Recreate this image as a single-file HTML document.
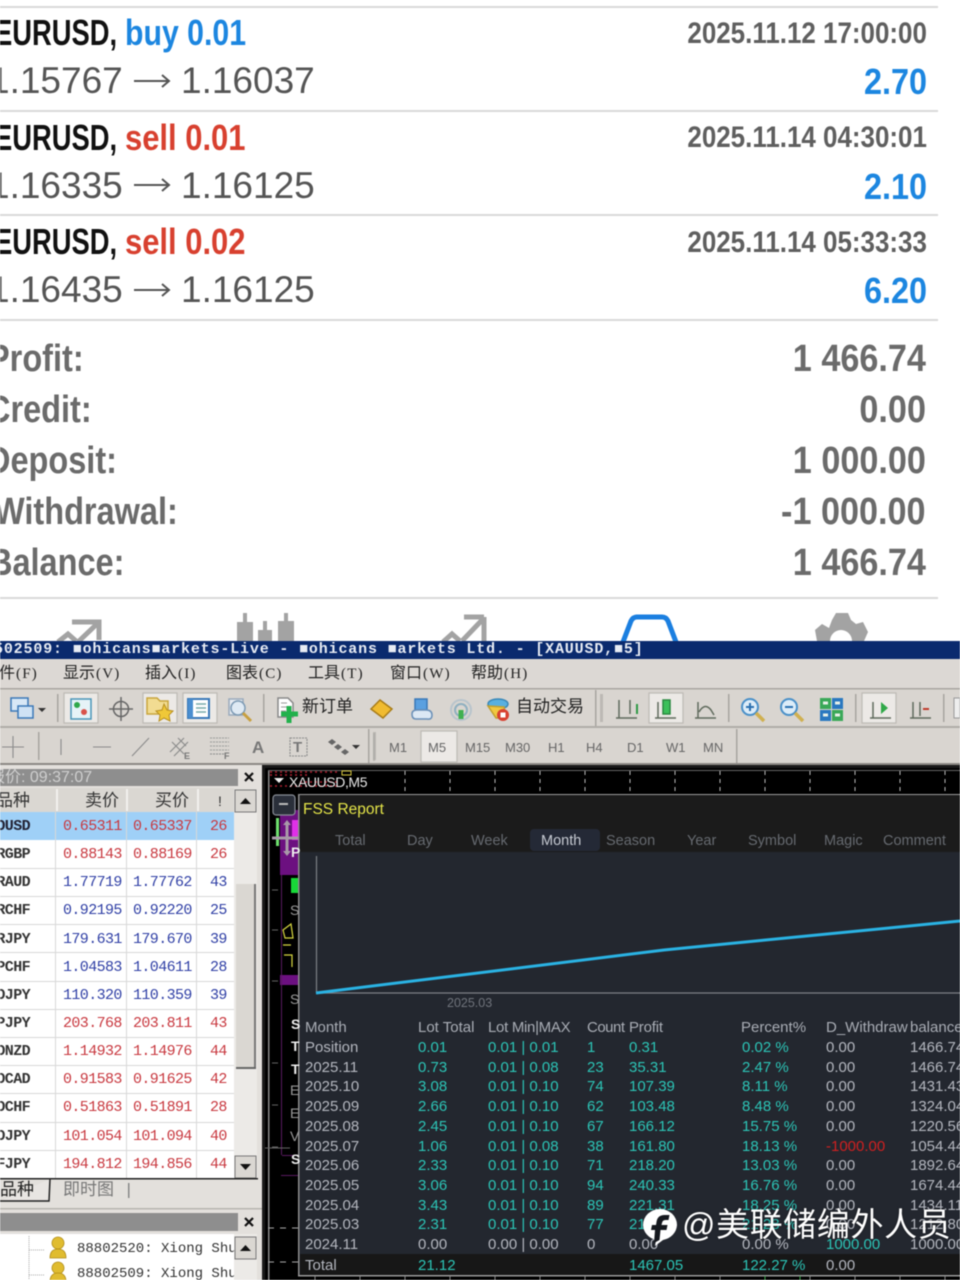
<!DOCTYPE html>
<html><head><meta charset="utf-8"><style>
html,body{margin:0;padding:0;background:#fff}
#p{position:relative;width:960px;height:1280px;overflow:hidden;background:#fff;font-family:"Liberation Sans","Noto Sans CJK SC",sans-serif;filter:blur(.45px)}
#p div{position:absolute}
.t{white-space:nowrap;line-height:1}
.b{font-weight:bold}
.hr{left:0;width:938px;height:1.5px;background:#d9d9d9}
.sym{font-size:36px;font-weight:bold;color:#111;left:-6px;transform:scaleX(.76);transform-origin:0 0;white-space:nowrap;line-height:1}
.act{font-size:36px;font-weight:bold;left:125px;transform:scaleX(.84);transform-origin:0 0;white-space:nowrap;line-height:1}
.sl{transform:scaleX(.86)}
.pr{font-size:37px;color:#555;white-space:nowrap;line-height:1}
.date{font-size:30px;font-weight:bold;color:#5f5f5f;right:33px;transform:scaleX(.865);transform-origin:100% 0;white-space:nowrap;line-height:1}
.val{font-size:36px;font-weight:bold;color:#1c86e0;right:33px;transform:scaleX(.9);transform-origin:100% 0;white-space:nowrap;line-height:1}
.lab{font-size:38px;font-weight:bold;color:#6b6b6b;transform:scaleX(.855);transform-origin:0 0;white-space:nowrap;line-height:1}
.num{font-size:38px;font-weight:bold;color:#6b6b6b;right:34px;transform:scaleX(.9);transform-origin:100% 0;white-space:nowrap;line-height:1}
.menu{top:665px;font-size:16px;color:#222;white-space:nowrap;line-height:18px}
.menu i{font-style:normal;font-family:"Liberation Serif",serif;font-size:15px;letter-spacing:1.2px;margin-left:1px}
.tf{top:741px;font-size:13px;color:#666;line-height:14px;white-space:nowrap}
.q{font-family:"Liberation Mono",monospace;font-size:15px;letter-spacing:-.6px;line-height:16px;white-space:nowrap}
.s{left:-20px;width:50px;text-align:right;font-family:"Liberation Mono",monospace;font-size:15px;letter-spacing:-.6px;font-weight:bold;color:#333;line-height:16px;white-space:nowrap}
.c1{left:63px}.c2{left:133px}.c3{left:210px}
.r{color:#c8383f}.bl{color:#2f3fa5}
.h{font-size:15px;line-height:16px;color:#a9adb5;white-space:nowrap}
.g{font-size:15px;line-height:16px;color:#b4b7bf;white-space:nowrap}
.e{font-size:15px;line-height:16px;color:#2cc4b6;white-space:nowrap}
.tb{top:833px;font-size:14.5px;color:#666a70;line-height:16px;white-space:nowrap}
</style></head><body><div id="p">

<div class="hr" style="top:6px"></div>
<div class="hr" style="top:110px"></div>
<div class="hr" style="top:214px"></div>
<div class="hr" style="top:319px"></div>
<div class="hr" style="top:597px"></div>

<div class="sym" style="top:15px">EURUSD,</div><div class="act" style="top:15px;color:#1c86e0">buy 0.01</div>
<div class="pr" style="top:62px;left:-11px">1.15767</div><div class="pr" style="top:62px;left:181px">1.16037</div>
<div class="date" style="top:19px">2025.11.12 17:00:00</div><div class="val" style="top:64px">2.70</div>

<div class="sym" style="top:120px">EURUSD,</div><div class="act sl" style="top:120px;color:#d8402f">sell 0.01</div>
<div class="pr" style="top:167px;left:-11px">1.16335</div><div class="pr" style="top:167px;left:181px">1.16125</div>
<div class="date" style="top:123px">2025.11.14 04:30:01</div><div class="val" style="top:169px">2.10</div>

<div class="sym" style="top:224px">EURUSD,</div><div class="act sl" style="top:224px;color:#d8402f">sell 0.02</div>
<div class="pr" style="top:271px;left:-11px">1.16435</div><div class="pr" style="top:271px;left:181px">1.16125</div>
<div class="date" style="top:228px">2025.11.14 05:33:33</div><div class="val" style="top:273px">6.20</div>

<div class="lab" style="top:340px;left:-12px">Profit:</div><div class="num" style="top:340px">1 466.74</div>
<div class="lab" style="top:391px;left:-13px">Credit:</div><div class="num" style="top:391px">0.00</div>
<div class="lab" style="top:442px;left:-13px">Deposit:</div><div class="num" style="top:442px">1 000.00</div>
<div class="lab" style="top:493px;left:-6px">Withdrawal:</div><div class="num" style="top:493px">-1 000.00</div>
<div class="lab" style="top:544px;left:-11px">Balance:</div><div class="num" style="top:544px">1 466.74</div>

<svg style="position:absolute;left:0;top:0" width="960" height="1280" viewBox="0 0 960 1280">
<!-- price arrows -->
<g fill="none" stroke="#555" stroke-width="2">
<path d="M134 81H168M162 75L169 81L162 87"/>
<path d="M134 185H168M162 179L169 185L162 191"/>
<path d="M134 290H168M162 284L169 290L162 296"/>
</g>
<!-- bottom nav icons -->
<g fill="none" stroke="#a3a3a3" stroke-width="5">
<path d="M72 622H99V640M99 622L78 642"/>
<path d="M58 642L68 634L76 641"/>
<path d="M484 617V641H484M484 617H464M484 618L462 641M443 642L452 634L460 641" />
</g>
<g fill="#a3a3a3">
<rect x="237" y="622" width="16" height="20"/><rect x="243" y="613" width="4" height="12"/>
<rect x="258" y="630" width="14" height="12"/><rect x="263" y="621" width="4" height="12"/>
<rect x="278" y="621" width="16" height="21"/><rect x="284" y="613" width="4" height="12"/>
<path d="M817 641L815 630L822 624L829 628L832 620L836 613H848L851 620L856 624L863 622L868 632L864 641H852A11 11 0 0 0 830 641Z"/>
</g>
<path d="M623 642L631 621Q633 617 637 617H662Q666 617 668 621L676 642" fill="none" stroke="#1b7fe0" stroke-width="5"/>

<!-- window chrome -->
<rect x="0" y="641" width="960" height="639" fill="#d9d5d0"/>
<rect x="0" y="641" width="960" height="18" fill="#0a2a6e"/>
<rect x="0" y="659" width="960" height="29" fill="#dcd8d4"/>
<rect x="0" y="688" width="960" height="1.5" fill="#a9a6a1"/>
<rect x="0" y="726" width="960" height="2" fill="#b0ada8"/>
<rect x="0" y="763" width="960" height="2" fill="#8c8985"/>
<rect x="0" y="765" width="262" height="515" fill="#e3e0dc"/>
<!-- toolbar separators -->
<g fill="#a8a5a0">
<rect x="57" y="694" width="1.5" height="28"/><rect x="263" y="694" width="1.5" height="28"/>
<rect x="595" y="690" width="1.5" height="36"/><rect x="728" y="694" width="1.5" height="28"/>
<rect x="855" y="694" width="1.5" height="28"/><rect x="943" y="694" width="1.5" height="28"/>
<rect x="38" y="732" width="1.5" height="28"/><rect x="368" y="729" width="1.5" height="34"/>
<rect x="736" y="729" width="1.5" height="34"/>
</g>
<rect x="600" y="694" width="3" height="28" fill="#bcb9b4"/>
<rect x="373" y="732" width="3" height="28" fill="#bcb9b4"/>
<!-- pressed buttons -->
<g fill="#ece9e6" stroke="#bdbab5" stroke-width="1.2">
<rect x="64" y="693" width="34" height="30"/><rect x="143" y="693" width="34" height="30"/>
<rect x="183" y="693" width="34" height="30"/><rect x="649" y="693" width="34" height="30"/>
<rect x="862" y="693" width="34" height="30"/><rect x="421" y="731" width="36" height="31"/>
</g>
<!-- toolbar 1 icons -->
<g fill="none" stroke-width="1.5">
<rect x="11" y="698" width="17" height="13" fill="#d8e8f6" stroke="#3a78b8"/><rect x="18" y="706" width="15" height="12" fill="#cfe2f4" stroke="#3a78b8"/>
<path d="M38 708h8l-4 4z" fill="#333" stroke="none"/>
<rect x="71" y="699" width="20" height="20" fill="#e6f3f7" stroke="#4a96b8"/>
<circle cx="77" cy="705" r="3" fill="#2fa84a" stroke="none"/><circle cx="84" cy="712" r="3" fill="#d9534a" stroke="none"/>
<circle cx="121" cy="709" r="7.5" stroke="#666"/><path d="M121 697v24M109 709h24" stroke="#666"/>
<path d="M147 698h10l3 3h8v13h-21z" fill="#f2dc92" stroke="#c8a53c"/><path d="M164 704l3 6 6 1-4 4 1 6-6-3-5 3 1-6-4-4 6-1z" fill="#f0c838" stroke="#b89020" stroke-width="1"/>
<rect x="188" y="699" width="21" height="19" fill="#fff" stroke="#3878b8" stroke-width="2"/><rect x="188" y="699" width="5" height="19" fill="#4a8ed0"/><path d="M196 704h10M196 708h10M196 712h10" stroke="#7aa"/>
<rect x="229" y="699" width="14" height="16" fill="#e8ecf2" stroke="#9ab"/><circle cx="238" cy="708" r="7" fill="#dfeaf4" stroke="#7c9ab4"/><path d="M243 713l8 8" stroke="#c8a040" stroke-width="3"/>
<path d="M278 698h10l5 5v14h-15z" fill="#fff" stroke="#888"/><path d="M281 703h6M281 707h8M281 711h5" stroke="#999" stroke-width="1"/><path d="M289 706v17M281 714h17" stroke="#22b14c" stroke-width="5"/>
<path d="M371 709l9-9 12 9-9 9z" fill="#f0bb30" stroke="#a87c18"/>
<rect x="415" y="699" width="12" height="11" fill="#5aa0e0" stroke="#3a78b8"/><path d="M412 714q0-4 5-4h9q6 0 6 5t-5 4h-11q-4 0-4-5z" fill="#dce8f4" stroke="#6a90b8"/>
<circle cx="461" cy="710" r="10" stroke="#b8c4cc" stroke-width="2"/><circle cx="461" cy="710" r="6" stroke="#8fb0c0" stroke-width="2"/><path d="M461 710v9" stroke="#40b050" stroke-width="5"/>
<ellipse cx="498" cy="704" rx="10" ry="5" fill="#58b0e0" stroke="#3a88b8"/><path d="M488 706l8 12h10l-2-11z" fill="#f0c840" stroke="#c0a030"/><circle cx="503" cy="715" r="6" fill="#d84030" stroke="none"/><rect x="500.5" y="712.5" width="5" height="5" fill="#fff"/>
</g>
<g fill="none" stroke="#5f6a5c" stroke-width="1.5">
<path d="M619 700v18M616 718h21M630 700v14"/><path d="M637 704v10" stroke="#2f9a45" stroke-width="2"/>
<path d="M658 702v16M655 718h21"/><rect x="663" y="700" width="7" height="14" fill="#3cc05a" stroke="#2a8a40"/>
<path d="M698 702v16M695 718h21M699 712q6-10 12-2l3 5"/>
<path d="M873 702v16M870 718h21"/><path d="M881 702l7 6-7 6z" fill="#30a848" stroke="none"/>
<path d="M913 702v16M910 718h21M920 702v14"/><path d="M929 709h-6" stroke="#c03a2a" stroke-width="2"/>
</g>
<g fill="none">
<circle cx="750" cy="707" r="8" fill="#dcecf8" stroke="#4a90c8" stroke-width="2"/><path d="M746 707h8M750 703v8" stroke="#2a70b0" stroke-width="2"/><path d="M756 713l8 8" stroke="#d0b050" stroke-width="3.5"/>
<circle cx="789" cy="707" r="8" fill="#dcecf8" stroke="#4a90c8" stroke-width="2"/><path d="M785 707h8" stroke="#2a70b0" stroke-width="2"/><path d="M795 713l8 8" stroke="#d0b050" stroke-width="3.5"/>
<rect x="820" y="698" width="11" height="11" fill="#3aa858"/><rect x="832" y="698" width="11" height="11" fill="#2a78c0"/><rect x="820" y="710" width="11" height="11" fill="#2a78c0"/><rect x="832" y="710" width="11" height="11" fill="#3aa858"/>
<path d="M823 703h5M835 703h5M823 715h5M835 715h5" stroke="#e8f0e8" stroke-width="3"/>
</g>
<rect x="954" y="698" width="6" height="20" fill="#eee" stroke="#999"/>
<!-- toolbar 2 icons -->
<g fill="none" stroke="#8a8a8a" stroke-width="1.1">
<path d="M13 736v22M2 747h22"/>
<path d="M61 739v16M93 747h18M132 756l17-18"/>
<path d="M170 752l14-14M174 756l14-14M172 742l12 12M178 738l8 8"/>
<path d="M210 738h19M210 742h19M210 746h19M210 750h19" stroke-dasharray="2 1" stroke="#999"/><path d="M210 754h14" stroke-dasharray="2 1"/>
<rect x="290" y="738" width="17" height="18" stroke-dasharray="2 1"/>
<path d="M352 745h8l-4 4z" fill="#333" stroke="none"/>
</g>
<path d="M332 739l4 3-4 3-4-3zM338 744l4 3-4 3-4-3zM345 749l4 3-4 3-4-3z" fill="#666"/>
<rect x="373" y="733" width="2" height="28" fill="#a9a6a1" opacity=".6"/>

<!-- left panel -->
<rect x="0" y="769" width="238" height="17" fill="#8e8e8e"/>
<path d="M245 773l8 8M253 773l-8 8" stroke="#111" stroke-width="2.2"/>
<rect x="0" y="788" width="234" height="24" fill="#dad7d2"/>
<g fill="#f2f0ee"><rect x="56" y="789" width="2" height="22"/><rect x="126" y="789" width="2" height="22"/><rect x="197" y="789" width="2" height="22"/></g>
<rect x="0" y="812" width="234" height="366" fill="#fff"/>
<rect x="0" y="812" width="234" height="28" fill="#9fd0f7"/>
<g fill="#d8d8d8">
<rect x="0" y="868" width="234" height="1"/><rect x="0" y="896" width="234" height="1"/><rect x="0" y="924" width="234" height="1"/><rect x="0" y="952" width="234" height="1"/><rect x="0" y="981" width="234" height="1"/><rect x="0" y="1009" width="234" height="1"/><rect x="0" y="1037" width="234" height="1"/><rect x="0" y="1065" width="234" height="1"/><rect x="0" y="1093" width="234" height="1"/><rect x="0" y="1122" width="234" height="1"/><rect x="0" y="1150" width="234" height="1"/>
<rect x="55" y="812" width="1" height="366"/><rect x="126" y="812" width="1" height="366"/><rect x="196" y="812" width="1" height="366"/>
</g>
<!-- scrollbar -->
<rect x="234" y="790" width="23" height="388" fill="#eceae7"/>
<rect x="235" y="790" width="21" height="22" fill="#dad7d2" stroke="#777"/>
<path d="M240 804h11l-5.500-6z" fill="#111"/>
<rect x="236" y="884" width="20" height="185" fill="#dad7d2"/><rect x="254" y="884" width="2" height="185" fill="#777"/><rect x="236" y="1067" width="20" height="2" fill="#666"/>
<rect x="235" y="1156" width="21" height="22" fill="#dad7d2" stroke="#777"/>
<path d="M240 1164h11l-5.500 6z" fill="#111"/>
<!-- tabs -->
<rect x="0" y="1178" width="258" height="1.5" fill="#222"/>
<path d="M0 1201H49L50 1179" fill="#e8e5e2" stroke="#222" stroke-width="1.5"/>
<rect x="128" y="1183" width="1.5" height="15" fill="#888"/>
<rect x="0" y="1208" width="262" height="1.5" fill="#b8b5b0"/>
<rect x="0" y="1213" width="238" height="18" fill="#8e8e8e"/>
<path d="M245 1218l8 8M253 1218l-8 8" stroke="#111" stroke-width="2.2"/>
<rect x="0" y="1234" width="234" height="46" fill="#fff"/>
<path d="M29 1236v44M29 1250h15M29 1275h15" stroke="#aaa" stroke-dasharray="1 1" fill="none"/>
<g fill="#e0bc30" stroke="#b08c18" stroke-width=".8">
<circle cx="58" cy="1243" r="6"/><path d="M50 1258q0-9 8-9t8 9z"/>
<circle cx="58" cy="1268" r="6"/><path d="M50 1282q0-9 8-9t8 9z"/>
</g>
<rect x="234" y="1234" width="23" height="46" fill="#eceae7"/>
<rect x="235" y="1237" width="21" height="22" fill="#dad7d2" stroke="#777"/>
<path d="M240 1251h11l-5.500-6z" fill="#111"/>

<!-- chart area -->
<rect x="262" y="765" width="698" height="515" fill="#1a1a1a"/>
<rect x="265" y="768" width="695" height="512" fill="#000"/>
<rect x="268" y="770" width="692" height="1" fill="#666"/>
<g stroke="#bbb" stroke-width="1" stroke-dasharray="4 4">
<path d="M405 771v20M450 771v20M495 771v20M540 771v20M585 771v20M630 771v20M675 771v20M720 771v20M765 771v20M810 771v20M855 771v20M900 771v20M945 771v20"/>
</g>
<path d="M270 772H340M270 775H310M300 782H340M270 786H340" stroke="#b02030" stroke-width="1.5" stroke-dasharray="2 3"/>
<path d="M274 778h10l-5 5z" fill="#eee"/>
<rect x="342" y="771" width="9" height="4" fill="none" stroke="#d8c840"/>
<!-- left strip under report -->
<rect x="268" y="771" width="1.5" height="509" fill="#888"/>
<rect x="280" y="810" width="20" height="65" fill="#6c1080"/>
<rect x="292" y="820" width="8" height="20" fill="#e030e8"/>
<rect x="281" y="875" width="19" height="100" fill="#000"/>
<rect x="280" y="975" width="20" height="10" fill="#6c1080"/>
<rect x="281" y="875" width="1" height="280" fill="#5a1a60"/>
<rect x="281" y="1175" width="19" height="1" fill="#5a1a60"/>
<rect x="282" y="1155" width="18" height="1" fill="#5a1a60"/>
<rect x="291" y="878" width="9" height="15" fill="#18d838"/>
<rect x="276" y="818" width="3" height="28" fill="#6ee06e"/>
<path d="M287 822v32M272 838h28" stroke="#a89aa8" stroke-width="3"/>
<path d="M287 820l-4 5h8zM287 856l-4-5h8z" fill="#a89aa8"/>
<path d="M283 930l8-6 2 14-8 0zM283 945h8M284 955l8 0 0 12" fill="none" stroke="#d8d840" stroke-width="1.2"/>
<g stroke="#666" stroke-width="1"><path d="M272 890h6M272 930h6M272 981h6M272 1063h6M272 1105h6M272 1147h6M265 1148h25"/></g>
<path d="M268 1228h30M268 1262h30" stroke="#aaa" stroke-dasharray="6 6"/>

<!-- report panel -->
<rect x="273" y="795" width="22" height="20" rx="3" fill="#2a2f3a" stroke="#8a8f98" stroke-width="1.2"/>
<rect x="279" y="803" width="9" height="2" fill="#bbb"/>
<rect x="298" y="794" width="662" height="481" fill="#23272f"/>
<rect x="298" y="794" width="662" height="1.2" fill="#9a9a9a"/>
<rect x="298" y="794" width="1.5" height="482" fill="#8b8b8b"/>
<rect x="298" y="1275" width="662" height="1.5" fill="#9a9a9a"/>
<rect x="300" y="795" width="660" height="57" fill="#1b1b1b"/>
<rect x="530" y="829" width="70" height="22" rx="4" fill="#242936"/>
<rect x="300" y="1254" width="660" height="21" fill="#171717"/>
<path d="M316.500 856V993H960" fill="none" stroke="#7d8086" stroke-width="1.2"/>
<path d="M316 993L664 950L960 921" fill="none" stroke="#2ab3e4" stroke-width="3"/>
<g stroke="#888" stroke-width="1"><path d="M315 1276v4M360 1276v4M405 1276v4M450 1276v4M495 1276v4M540 1276v4M585 1276v4M630 1276v4M675 1276v4M720 1276v4M765 1276v4M810 1276v4M855 1276v4M900 1276v4M945 1276v4"/></g>
<path d="M765 1276v4M800 1276v4" stroke="#39a84a"/>
</svg>

<!-- window text -->
<div class="t b" style="left:-6px;top:641px;font:bold 15px/17px 'Liberation Mono',monospace;letter-spacing:.84px;color:#e8ecf4">502509: ■ohicans■arkets-Live - ■ohicans ■arkets Ltd. - [XAUUSD,■5]</div>
<div class="menu" style="left:-1px">件<i>(F)</i></div>
<div class="menu" style="left:63px">显示<i>(V)</i></div>
<div class="menu" style="left:145px">插入<i>(I)</i></div>
<div class="menu" style="left:226px">图表<i>(C)</i></div>
<div class="menu" style="left:308px">工具<i>(T)</i></div>
<div class="menu" style="left:390px">窗口<i>(W)</i></div>
<div class="menu" style="left:471px">帮助<i>(H)</i></div>
<div class="t" style="left:302px;top:698px;font-size:17px;color:#222">新订单</div>
<div class="t" style="left:516px;top:698px;font-size:17px;color:#222">自动交易</div>
<div class="t" style="left:252px;top:739px;font-size:17px;font-weight:bold;color:#777">A</div>
<div class="t" style="left:293px;top:740px;font-size:15px;font-weight:bold;color:#777">T</div>
<div class="t" style="left:184px;top:752px;font-size:9px;font-weight:bold;color:#777">E</div>
<div class="t" style="left:224px;top:752px;font-size:9px;font-weight:bold;color:#777">F</div>
<div class="tf" style="left:389px">M1</div><div class="tf" style="left:428px">M5</div><div class="tf" style="left:465px">M15</div><div class="tf" style="left:505px">M30</div><div class="tf" style="left:548px">H1</div><div class="tf" style="left:586px">H4</div><div class="tf" style="left:627px">D1</div><div class="tf" style="left:666px">W1</div><div class="tf" style="left:703px">MN</div>

<div class="t" style="left:-11px;top:769px;font-size:16px;line-height:17px;color:#cfcfcf">报价: 09:37:07</div>
<div class="t" style="left:-4px;top:792px;font-size:17px;color:#333;line-height:18px">品种</div>
<div class="t" style="left:85px;top:792px;font-size:17px;color:#333;line-height:18px">卖价</div>
<div class="t" style="left:155px;top:792px;font-size:17px;color:#333;line-height:18px">买价</div>
<div class="t" style="left:218px;top:794px;font-size:14px;color:#333">!</div>

<div style="left:0;top:1px">
<div class="s" style="top:818px;color:#223">OUSD</div><div class="q r c1" style="top:818px">0.65311</div><div class="q r c2" style="top:818px">0.65337</div><div class="q r c3" style="top:818px">26</div>
<div class="s" style="top:846px">RGBP</div><div class="q r c1" style="top:846px">0.88143</div><div class="q r c2" style="top:846px">0.88169</div><div class="q r c3" style="top:846px">26</div>
<div class="s" style="top:874px">RAUD</div><div class="q bl c1" style="top:874px">1.77719</div><div class="q bl c2" style="top:874px">1.77762</div><div class="q bl c3" style="top:874px">43</div>
<div class="s" style="top:902px">RCHF</div><div class="q bl c1" style="top:902px">0.92195</div><div class="q bl c2" style="top:902px">0.92220</div><div class="q bl c3" style="top:902px">25</div>
<div class="s" style="top:931px">RJPY</div><div class="q bl c1" style="top:931px">179.631</div><div class="q bl c2" style="top:931px">179.670</div><div class="q bl c3" style="top:931px">39</div>
<div class="s" style="top:959px">PCHF</div><div class="q bl c1" style="top:959px">1.04583</div><div class="q bl c2" style="top:959px">1.04611</div><div class="q bl c3" style="top:959px">28</div>
<div class="s" style="top:987px">OJPY</div><div class="q bl c1" style="top:987px">110.320</div><div class="q bl c2" style="top:987px">110.359</div><div class="q bl c3" style="top:987px">39</div>
<div class="s" style="top:1015px">PJPY</div><div class="q r c1" style="top:1015px">203.768</div><div class="q r c2" style="top:1015px">203.811</div><div class="q r c3" style="top:1015px">43</div>
<div class="s" style="top:1043px">ONZD</div><div class="q r c1" style="top:1043px">1.14932</div><div class="q r c2" style="top:1043px">1.14976</div><div class="q r c3" style="top:1043px">44</div>
<div class="s" style="top:1071px">OCAD</div><div class="q r c1" style="top:1071px">0.91583</div><div class="q r c2" style="top:1071px">0.91625</div><div class="q r c3" style="top:1071px">42</div>
<div class="s" style="top:1099px">OCHF</div><div class="q r c1" style="top:1099px">0.51863</div><div class="q r c2" style="top:1099px">0.51891</div><div class="q r c3" style="top:1099px">28</div>
<div class="s" style="top:1128px">OJPY</div><div class="q r c1" style="top:1128px">101.054</div><div class="q r c2" style="top:1128px">101.094</div><div class="q r c3" style="top:1128px">40</div>
<div class="s" style="top:1156px">FJPY</div><div class="q r c1" style="top:1156px">194.812</div><div class="q r c2" style="top:1156px">194.856</div><div class="q r c3" style="top:1156px">44</div>
</div>

<div class="t" style="left:0;top:1181px;font-size:17px;color:#222;line-height:18px">品种</div>
<div class="t" style="left:63px;top:1181px;font-size:17px;color:#777;line-height:18px">即时图</div>
<div class="t" style="left:77px;top:1242px;font:14px/15px 'Liberation Mono',monospace;color:#333;width:157px;overflow:hidden">88802520: Xiong Shu</div>
<div class="t" style="left:77px;top:1267px;font:14px/15px 'Liberation Mono',monospace;color:#333;width:157px;overflow:hidden">88802509: Xiong Shu</div>

<div class="t" style="left:289px;top:775px;font-size:14px;color:#e8e8e8;letter-spacing:-.4px">XAUUSD,M5</div>
<div class="t b" style="left:291px;top:845px;font-size:14px;color:#eee">P</div>
<div class="t" style="left:290px;top:903px;font-size:14px;color:#999">S</div>
<div class="t" style="left:290px;top:992px;font-size:14px;color:#999">S</div>
<div class="t b" style="left:291px;top:1017px;font-size:14px;color:#eee">S</div>
<div class="t b" style="left:291px;top:1039px;font-size:14px;color:#eee">T</div>
<div class="t b" style="left:291px;top:1062px;font-size:14px;color:#eee">T</div>
<div class="t" style="left:290px;top:1083px;font-size:14px;color:#999">E</div>
<div class="t" style="left:290px;top:1106px;font-size:14px;color:#999">E</div>
<div class="t" style="left:290px;top:1129px;font-size:14px;color:#999">V</div>
<div class="t b" style="left:291px;top:1152px;font-size:14px;color:#eee">S</div>

<div class="t" style="left:303px;top:802px;font-size:15.5px;color:#e4e448">FSS Report</div>
<div class="tb" style="left:335px">Total</div><div class="tb" style="left:407px">Day</div><div class="tb" style="left:471px">Week</div><div class="tb" style="left:541px;color:#c6cad2">Month</div><div class="tb" style="left:606px">Season</div><div class="tb" style="left:687px">Year</div><div class="tb" style="left:748px">Symbol</div><div class="tb" style="left:824px">Magic</div><div class="tb" style="left:883px">Comment</div>
<div class="t" style="left:447px;top:997px;font-size:12.5px;color:#70747c">2025.03</div>

<div style="left:0;top:1px">
<div class="h" style="left:305px;top:1019px">Month</div><div class="h" style="left:418px;top:1019px">Lot Total</div><div class="h" style="left:488px;top:1019px;letter-spacing:-.3px">Lot Min|MAX</div><div class="h" style="left:587px;top:1019px;letter-spacing:-.5px">Count</div><div class="h" style="left:629px;top:1019px;letter-spacing:-.2px">Profit</div><div class="h" style="left:741px;top:1019px">Percent%</div><div class="h" style="left:826px;top:1019px">D_Withdraw</div><div class="h" style="left:910px;top:1019px">balance</div>

<div class="g" style="left:305px;top:1039px">Position</div><div class="e" style="left:418px;top:1039px">0.01</div><div class="e" style="left:488px;top:1039px">0.01 | 0.01</div><div class="e" style="left:587px;top:1039px">1</div><div class="e" style="left:629px;top:1039px">0.31</div><div class="e" style="left:742px;top:1039px">0.02 %</div><div class="g" style="left:826px;top:1039px">0.00</div><div class="g" style="left:910px;top:1039px">1466.74</div>
<div class="g" style="left:305px;top:1059px">2025.11</div><div class="e" style="left:418px;top:1059px">0.73</div><div class="e" style="left:488px;top:1059px">0.01 | 0.08</div><div class="e" style="left:587px;top:1059px">23</div><div class="e" style="left:629px;top:1059px">35.31</div><div class="e" style="left:742px;top:1059px">2.47 %</div><div class="g" style="left:826px;top:1059px">0.00</div><div class="g" style="left:910px;top:1059px">1466.74</div>
<div class="g" style="left:305px;top:1078px">2025.10</div><div class="e" style="left:418px;top:1078px">3.08</div><div class="e" style="left:488px;top:1078px">0.01 | 0.10</div><div class="e" style="left:587px;top:1078px">74</div><div class="e" style="left:629px;top:1078px">107.39</div><div class="e" style="left:742px;top:1078px">8.11 %</div><div class="g" style="left:826px;top:1078px">0.00</div><div class="g" style="left:910px;top:1078px">1431.43</div>
<div class="g" style="left:305px;top:1098px">2025.09</div><div class="e" style="left:418px;top:1098px">2.66</div><div class="e" style="left:488px;top:1098px">0.01 | 0.10</div><div class="e" style="left:587px;top:1098px">62</div><div class="e" style="left:629px;top:1098px">103.48</div><div class="e" style="left:742px;top:1098px">8.48 %</div><div class="g" style="left:826px;top:1098px">0.00</div><div class="g" style="left:910px;top:1098px">1324.04</div>
<div class="g" style="left:305px;top:1118px">2025.08</div><div class="e" style="left:418px;top:1118px">2.45</div><div class="e" style="left:488px;top:1118px">0.01 | 0.10</div><div class="e" style="left:587px;top:1118px">67</div><div class="e" style="left:629px;top:1118px">166.12</div><div class="e" style="left:742px;top:1118px">15.75 %</div><div class="g" style="left:826px;top:1118px">0.00</div><div class="g" style="left:910px;top:1118px">1220.56</div>
<div class="g" style="left:305px;top:1138px">2025.07</div><div class="e" style="left:418px;top:1138px">1.06</div><div class="e" style="left:488px;top:1138px">0.01 | 0.08</div><div class="e" style="left:587px;top:1138px">38</div><div class="e" style="left:629px;top:1138px">161.80</div><div class="e" style="left:742px;top:1138px">18.13 %</div><div class="g" style="left:826px;top:1138px;color:#d02020">-1000.00</div><div class="g" style="left:910px;top:1138px">1054.44</div>
<div class="g" style="left:305px;top:1157px">2025.06</div><div class="e" style="left:418px;top:1157px">2.33</div><div class="e" style="left:488px;top:1157px">0.01 | 0.10</div><div class="e" style="left:587px;top:1157px">71</div><div class="e" style="left:629px;top:1157px">218.20</div><div class="e" style="left:742px;top:1157px">13.03 %</div><div class="g" style="left:826px;top:1157px">0.00</div><div class="g" style="left:910px;top:1157px">1892.64</div>
<div class="g" style="left:305px;top:1177px">2025.05</div><div class="e" style="left:418px;top:1177px">3.06</div><div class="e" style="left:488px;top:1177px">0.01 | 0.10</div><div class="e" style="left:587px;top:1177px">94</div><div class="e" style="left:629px;top:1177px">240.33</div><div class="e" style="left:742px;top:1177px">16.76 %</div><div class="g" style="left:826px;top:1177px">0.00</div><div class="g" style="left:910px;top:1177px">1674.44</div>
<div class="g" style="left:305px;top:1197px">2025.04</div><div class="e" style="left:418px;top:1197px">3.43</div><div class="e" style="left:488px;top:1197px">0.01 | 0.10</div><div class="e" style="left:587px;top:1197px">89</div><div class="e" style="left:629px;top:1197px">221.31</div><div class="e" style="left:742px;top:1197px">18.25 %</div><div class="g" style="left:826px;top:1197px">0.00</div><div class="g" style="left:910px;top:1197px">1434.11</div>
<div class="g" style="left:305px;top:1216px">2025.03</div><div class="e" style="left:418px;top:1216px">2.31</div><div class="e" style="left:488px;top:1216px">0.01 | 0.10</div><div class="e" style="left:587px;top:1216px">77</div><div class="e" style="left:629px;top:1216px">212.80</div><div class="e" style="left:742px;top:1216px">21.28 %</div><div class="g" style="left:826px;top:1216px">0.00</div><div class="g" style="left:910px;top:1216px">1212.80</div>
<div class="g" style="left:305px;top:1236px">2024.11</div><div class="g" style="left:418px;top:1236px">0.00</div><div class="g" style="left:488px;top:1236px">0.00 | 0.00</div><div class="g" style="left:587px;top:1236px">0</div><div class="g" style="left:629px;top:1236px">0.00</div><div class="g" style="left:742px;top:1236px">0.00 %</div><div class="e" style="left:826px;top:1236px">1000.00</div><div class="g" style="left:910px;top:1236px">1000.00</div>
<div class="g" style="left:305px;top:1257px">Total</div><div class="e" style="left:418px;top:1257px">21.12</div><div class="e" style="left:629px;top:1257px">1467.05</div><div class="e" style="left:742px;top:1257px">122.27 %</div><div class="g" style="left:826px;top:1257px">0.00</div>
</div>

<!-- watermark -->
<svg style="position:absolute;left:0;top:0" width="960" height="1280" viewBox="0 0 960 1280">
<path d="M660 1209a17 16 0 0 1 17 16a17 16 0 0 1-14 15l-8 6l1-6a17 16 0 0 1-13-15a17 16 0 0 1 17-16z" fill="#fff"/>
<path d="M654 1243l1-13h-4l1-5h4l.5-3q1-7 8-7h5l-1 5h-3q-3 0-3.500 3l-.5 2h6l-1 5h-6l-1 10z" fill="#15181e"/>
</svg>
<div class="t" style="left:682px;top:1205px;font-size:33px;line-height:40px;letter-spacing:.6px;color:#fff;font-family:'Liberation Sans','Noto Sans CJK SC',sans-serif;text-shadow:0 0 2px rgba(0,0,0,.5)">@美联储编外人员</div>
</div></body></html>
